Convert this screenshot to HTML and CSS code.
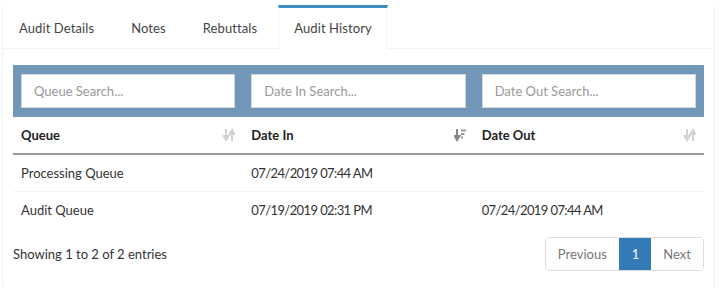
FILE: index.html
```html
<!DOCTYPE html>
<html>
<head>
<meta charset="utf-8">
<link rel="stylesheet" href="styles.css">
</head>
<body>
<div class="box">
  <ul class="tabs">
    <li class="tab">Audit Details</li>
    <li class="tab">Notes</li>
    <li class="tab">Rebuttals</li>
    <li class="tab active">Audit History</li>
  </ul>
  <div class="content">
    <div class="filters">
      <div class="input">Queue Search...</div>
      <div class="input">Date In Search...</div>
      <div class="input">Date Out Search...</div>
    </div>
    <table class="grid">
      <thead>
        <tr>
          <th><span>Queue</span>
            <svg class="sort" viewBox="0 0 12 14" width="12" height="14"><path d="M3 1v9M0.5 8l2.5 4 2.5-4Z" stroke="#d2d2d2" stroke-width="2" fill="#d2d2d2"/><path d="M9 13V4M6.5 6l2.5-4 2.5 4Z" stroke="#d2d2d2" stroke-width="2" fill="#d2d2d2"/></svg>
          </th>
          <th><span>Date In</span>
            <svg class="sort" viewBox="0 0 12 14" width="12" height="14"><path d="M3 1v9M0.5 8l2.5 4 2.5-4Z" stroke="#888" stroke-width="2" fill="#888"/><path d="M7 2.5h5M7 6h3.5M7 9.5h2" stroke="#999" stroke-width="1.8"/></svg>
          </th>
          <th><span>Date Out</span>
            <svg class="sort" viewBox="0 0 12 14" width="12" height="14"><path d="M3 1v9M0.5 8l2.5 4 2.5-4Z" stroke="#d2d2d2" stroke-width="2" fill="#d2d2d2"/><path d="M9 13V4M6.5 6l2.5-4 2.5 4Z" stroke="#d2d2d2" stroke-width="2" fill="#d2d2d2"/></svg>
          </th>
        </tr>
      </thead>
      <tbody>
        <tr><td>Processing Queue</td><td class="date">07/24/2019 07:44 AM</td><td></td></tr>
        <tr><td>Audit Queue</td><td class="date">07/19/2019 02:31 PM</td><td class="date">07/24/2019 07:44 AM</td></tr>
      </tbody>
    </table>
    <div class="footer">
      <div class="info">Showing 1 to 2 of 2 entries</div>
      <div class="pager">
        <span class="pg">Previous</span>
        <span class="pg current">1</span>
        <span class="pg">Next</span>
      </div>
    </div>
  </div>
</div>
</body>
</html>
```
FILE: styles.css
```css
* { box-sizing: border-box; }
body {
  margin: 0;
  background: #fff;
  font-family: "Lato", "Liberation Sans", sans-serif;
  font-size: 13px;
  color: #333;
}
.box {
  margin: 5px 8px 0 2px;
  width: 713px;
  background: #fff;
  border-left: 1px solid #f4f4f4;
  border-right: 1px solid #f0f0f0;
  border-radius: 3px;
  box-shadow: 0 1px 1px rgba(0,0,0,0.1);
  padding-bottom: 17px;
}
.tabs {
  list-style: none;
  margin: 0;
  padding: 0;
  display: flex;
  border-bottom: 1px solid #f4f4f4;
  height: 44px;
}
.tab {
  border-top: 3px solid transparent;
  padding: 10px 15px;
  line-height: 21px;
  color: #444;
  letter-spacing: 0.1px;
  margin-right: 5px;
  margin-bottom: -1px;
  border-left: 1px solid transparent;
  border-right: 1px solid transparent;
}
.tab.active {
  border-top-color: #3c8dbc;
  border-left-color: #f4f4f4;
  border-right-color: #f4f4f4;
  background: #fff;
}
.content {
  padding: 16px 10px 0 10px;
}
.filters {
  background: #7397b9;
  padding: 9px 8px;
  display: flex;
  gap: 16px;
}
.input {
  flex: 1;
  height: 34px;
  background: #fff;
  border: 1px solid #d2d6de;
  padding: 0 12px;
  line-height: 32px;
  color: #999;
}
.grid {
  width: 100%;
  border-collapse: collapse;
  table-layout: fixed;
}
.grid th {
  text-align: left;
  font-weight: 700;
  color: #222;
  padding: 8px 8px;
  line-height: 20px;
  height: 36px;
  border-bottom: 2px solid #999;
  position: relative;
}
.grid th .sort {
  position: absolute;
  right: 8px;
  top: 11px;
}
.grid td {
  padding: 8px 8px;
  line-height: 20px;
  height: 37px;
  color: #333;
}
.grid td.date { letter-spacing: -0.6px; }
.grid tbody tr + tr td {
  border-top: 1px solid #f4f4f4;
}
.footer {
  display: flex;
  justify-content: space-between;
  align-items: center;
  margin-top: 8px;
}
.info { color: #333; }
.pager {
  display: flex;
  border: 1px solid #ddd;
  border-radius: 4px;
  overflow: hidden;
}
.pg {
  padding: 6px 12px;
  line-height: 20px;
  color: #777;
  background: #fff;
}
.pg + .pg { border-left: 1px solid #ddd; }
.pg.current {
  background: #337ab7;
  color: #fff;
  border-left-color: #337ab7;
}
.pg.current + .pg { border-left: none; }
```
